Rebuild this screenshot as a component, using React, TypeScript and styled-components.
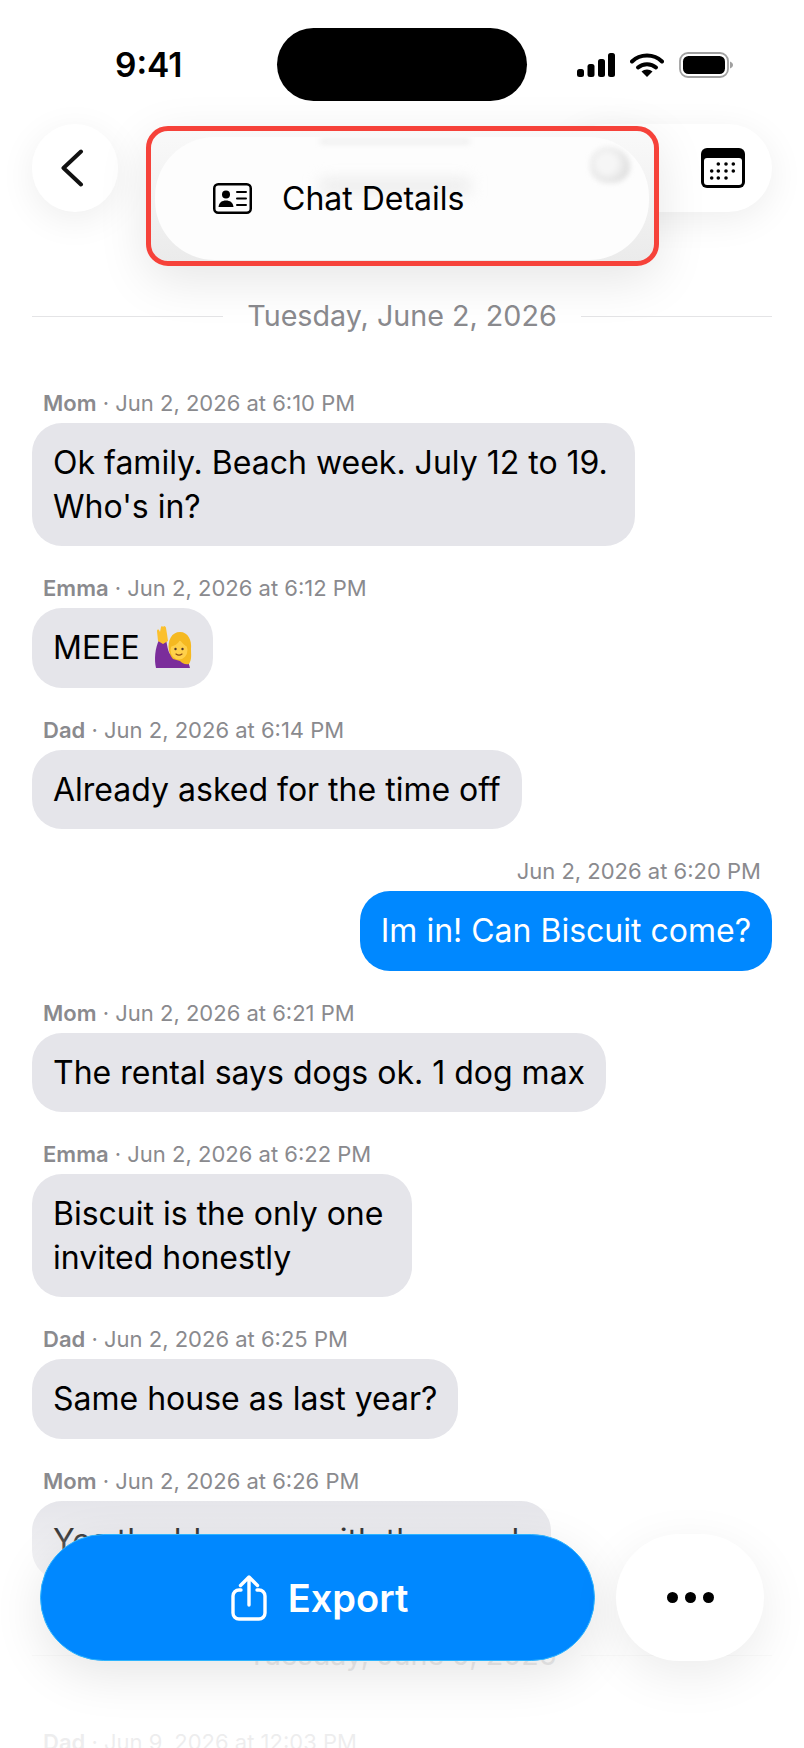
import React from 'react';
import styled, { createGlobalStyle } from 'styled-components';

const GlobalStyle = createGlobalStyle`
  html, body {
    margin: 0;
    padding: 0;
    background: #fff;
  }
  body {
    font-family: Inter, "Liberation Sans", sans-serif;
    -webkit-font-smoothing: antialiased;
  }
`;

type Message = {
  name?: string;
  time: string;
  text: string;
  emoji?: boolean;
  mine?: boolean;
  roomy?: boolean;
};

const firstDay: Message[] = [
  { name: 'Mom', time: 'Jun 2, 2026 at 6:10 PM', text: "Ok family. Beach week. July 12 to 19. Who's in?" },
  { name: 'Emma', time: 'Jun 2, 2026 at 6:12 PM', text: 'MEEE', emoji: true },
  { name: 'Dad', time: 'Jun 2, 2026 at 6:14 PM', text: 'Already asked for the time off' },
  { time: 'Jun 2, 2026 at 6:20 PM', text: 'Im in! Can Biscuit come?', mine: true },
  { name: 'Mom', time: 'Jun 2, 2026 at 6:21 PM', text: 'The rental says dogs ok. 1 dog max' },
  { name: 'Emma', time: 'Jun 2, 2026 at 6:22 PM', text: 'Biscuit is the only one\ninvited honestly', roomy: true },
  { name: 'Dad', time: 'Jun 2, 2026 at 6:25 PM', text: 'Same house as last year?' },
  { name: 'Mom', time: 'Jun 2, 2026 at 6:26 PM', text: 'Yes the blue one with the porch' },
];

const WavingWoman = () => (
  <EmojiSvg viewBox="0 0 38 42" aria-hidden="true">
    <path d="M2 42c-2-8-1-20 3-28l7-1c1 6 2 12 4 15l10 3 8 4 2 7z" fill="#7b2d9b" />
    <path d="M4 15 3 5c0-1 1-2 2-1l1 2 1-5c0-1 2-1 2 0l1-1c1 0 2 1 2 2l1 6 1 7-5 3z" fill="#fbc02d" />
    <path d="M15 25c-2-11 3-19 11-19s12 8 11 17c0 6 1 10-2 15-4 1-7-1-9-3l-7-2c-2-2-3-5-4-8z" fill="#f5b921" />
    <ellipse cx="25" cy="24" rx="8.500" ry="9.500" fill="#ffd04a" />
    <path d="M16 21c4-1 8-3 10-7 2 3 5 6 8 7l-1-8-8-3-7 3z" fill="#f5b921" />
    <circle cx="21.500" cy="23" r="1.200" fill="#4e342e" />
    <circle cx="28.500" cy="23" r="1.200" fill="#4e342e" />
    <path d="M22 28c2 1.500 4 1.500 6 0" fill="none" stroke="#8d4a12" strokeWidth="1.200" strokeLinecap="round" />
  </EmojiSvg>
);

const ChatBubble = ({ message }: { message: Message }) => (
  <MessageRow $mine={message.mine}>
    <Meta>
      {message.name && (
        <>
          <SenderName>{message.name}</SenderName> ·{' '}
        </>
      )}
      {message.time}
    </Meta>
    <Bubble $mine={message.mine} $roomy={message.roomy}>
      {message.text}
      {message.emoji && <WavingWoman />}
    </Bubble>
  </MessageRow>
);

const App = () => {
  return (
    <Screen>
      <GlobalStyle />
      <StatusBar>
        <Clock>9:41</Clock>
        <Island />
        <StatusIcons>
          <svg width="38" height="24" viewBox="0 0 38 24" aria-hidden="true">
            <rect x="0" y="16" width="7" height="8" rx="2.500" />
            <rect x="10.500" y="11" width="7" height="13" rx="2.500" />
            <rect x="21" y="6" width="7" height="18" rx="2.500" />
            <rect x="31" y="0" width="7" height="24" rx="2.500" />
          </svg>
          <svg width="34" height="25" viewBox="0 0 34 25" aria-hidden="true">
            <path d="M2 9.500C10 1.500 24 1.500 32 9.500" fill="none" stroke="#000" strokeWidth="4" strokeLinecap="round" />
            <path d="M8 15.500C13 11 21 11 26 15.500" fill="none" stroke="#000" strokeWidth="4" strokeLinecap="round" />
            <path d="M11.500 19.500 17 25l5.500-5.500c-3-2.700-8-2.700-11 0z" />
          </svg>
          <svg width="54" height="26" viewBox="0 0 54 26" aria-hidden="true">
            <rect x="1" y="1" width="48" height="24" rx="8" fill="#fff" stroke="#a0a0a0" strokeWidth="1.800" />
            <rect x="4" y="4" width="42" height="18" rx="5.500" />
            <path d="M51 9.500c2 .7 3 2 3 3.500s-1 2.800-3 3.500z" fill="#a0a0a0" />
          </svg>
        </StatusIcons>
      </StatusBar>

      <NavBar>
        <RoundButton aria-label="Back">
          <svg width="24" height="38" viewBox="0 0 24 38" aria-hidden="true">
            <path d="M21 2.500 3.500 19 21 35.500" fill="none" stroke="#111" strokeWidth="4" strokeLinecap="round" strokeLinejoin="round" />
          </svg>
        </RoundButton>
        <ActionsPill>
          <svg width="44" height="40" viewBox="0 0 44 40" aria-hidden="true">
            <rect x="0" y="0" width="44" height="40" rx="6" />
            <rect x="3" y="10" width="38" height="27" rx="3" fill="#fff" />
            {[
              [17.300, 16], [25, 16], [32.300, 16],
              [10.700, 23], [17.300, 23], [25, 23], [32.300, 23],
              [10.700, 30], [17.300, 30], [25, 30],
            ].map(([cx, cy]) => (
              <circle key={`${cx}-${cy}`} cx={cx} cy={cy} r="1.800" />
            ))}
          </svg>
        </ActionsPill>
      </NavBar>

      <Feed>
        <DateDivider>
          <DateLabel>Tuesday, June 2, 2026</DateLabel>
        </DateDivider>
        {firstDay.map((message) => (
          <ChatBubble key={message.time} message={message} />
        ))}
        <DateDivider $late>
          <DateLabel>Tuesday, June 9, 2026</DateLabel>
        </DateDivider>
        <MessageRow>
          <Meta>
            <SenderName>Dad</SenderName> · Jun 9, 2026 at 12:03 PM
          </Meta>
        </MessageRow>
      </Feed>

      <Highlight>
        <Menu>
          <TitleSmudge />
          <SubtitleSmudge />
          <IconSmudge />
          <MenuRow>
            <svg width="39" height="31" viewBox="0 0 39 31" aria-hidden="true">
              <rect x="1.250" y="1.250" width="36.500" height="28.500" rx="4" fill="none" stroke="#000" strokeWidth="2.500" />
              <circle cx="13" cy="11.500" r="4" />
              <path d="M5.500 24c.5-4.500 3.500-6.500 7.500-6.500s7 2 7.500 6.500z" />
              <path d="M24 9h9M24 15.500h9M24 22h9" stroke="#000" strokeWidth="2" strokeLinecap="round" />
            </svg>
            <MenuLabel>Chat Details</MenuLabel>
          </MenuRow>
        </Menu>
      </Highlight>

      <BottomFade />
      <BottomBar>
        <ExportButton>
          <svg width="36" height="46" viewBox="0 0 36 46" aria-hidden="true">
            <path d="M10 15H8a6 6 0 0 0-6 6v17a6 6 0 0 0 6 6h20a6 6 0 0 0 6-6V21a6 6 0 0 0-6-6h-2" fill="none" stroke="#fff" strokeWidth="3.400" strokeLinecap="round" />
            <path d="M18 30V3M9.500 10.500 18 2l8.500 8.500" fill="none" stroke="#fff" strokeWidth="3.400" strokeLinecap="round" strokeLinejoin="round" />
          </svg>
          Export
        </ExportButton>
        <MoreButton aria-label="More">
          <Dot />
          <Dot />
          <Dot />
        </MoreButton>
      </BottomBar>
    </Screen>
  );
};

const Screen = styled.div`
  position: relative;
  width: 804px;
  height: 1748px;
  overflow: hidden;
  background: #fff;
`;

const StatusBar = styled.div`
  display: grid;
  grid-template-columns: 277px 250px 277px;
  align-items: center;
  box-sizing: border-box;
  height: 124px;
  padding-top: 28px;
  padding-bottom: 23px;
`;

const Clock = styled.div`
  padding-left: 115px;
  font-size: 33.500px;
  font-weight: 600;
  color: #000;
`;

const Island = styled.div`
  width: 250px;
  height: 73px;
  border-radius: 37px;
  background: #000;
`;

const StatusIcons = styled.div`
  display: flex;
  align-items: center;
  gap: 15px;
  padding-left: 50px;
`;

const NavBar = styled.div`
  display: flex;
  justify-content: space-between;
  height: 88px;
  padding: 0 32px;
  margin-bottom: 85px;
`;

const RoundButton = styled.div`
  display: flex;
  align-items: center;
  justify-content: center;
  width: 86px;
  height: 88px;
  padding-right: 6px;
  box-sizing: border-box;
  border-radius: 44px;
  background: #fff;
  box-shadow: 0 8px 36px rgba(0, 0, 0, 0.07);
`;

const ActionsPill = styled.div`
  display: flex;
  align-items: center;
  justify-content: flex-end;
  width: 210px;
  height: 88px;
  padding-right: 27px;
  box-sizing: border-box;
  border-radius: 44px;
  background: #fff;
  box-shadow: 0 8px 36px rgba(0, 0, 0, 0.07);
`;

const Feed = styled.div`
  display: flex;
  flex-direction: column;
  padding: 0 32px;
`;

const DateDivider = styled.div<{ $late?: boolean }>`
  display: flex;
  align-items: center;
  gap: 24px;
  height: 38px;
  margin-top: ${(p) => (p.$late ? '56px' : '0')};
  margin-bottom: 26px;
  &::before,
  &::after {
    content: '';
    flex: 1;
    height: 1px;
    background: #e4e4e6;
  }
`;

const DateLabel = styled.span`
  font-size: 28.700px;
  line-height: 38px;
  color: #8a8a8e;
`;

const MessageRow = styled.div<{ $mine?: boolean }>`
  display: flex;
  flex-direction: column;
  align-items: ${(p) => (p.$mine ? 'flex-end' : 'flex-start')};
  padding-top: 30px;
`;

const Meta = styled.div`
  height: 24px;
  padding: 0 11px;
  margin-bottom: 8px;
  font-size: 22px;
  line-height: 24px;
  color: #8a8a8e;
`;

const SenderName = styled.span`
  font-weight: 600;
`;

const Bubble = styled.div<{ $mine?: boolean; $roomy?: boolean }>`
  box-sizing: border-box;
  max-width: 603px;
  padding: 18px ${(p) => (p.$roomy ? '29px' : '21px')} 18px 21px;
  border-radius: 30px;
  font-size: 32px;
  line-height: 43.500px;
  white-space: pre-line;
  color: ${(p) => (p.$mine ? '#fff' : '#000')};
  background: ${(p) => (p.$mine ? '#0088ff' : '#e5e5ea')};
`;

const EmojiSvg = styled.svg`
  width: 38px;
  height: 42px;
  margin-left: 14px;
  vertical-align: -9px;
`;

const Highlight = styled.div`
  position: absolute;
  top: 126px;
  left: 146px;
  box-sizing: border-box;
  width: 513px;
  height: 140px;
  padding: 6px 5px 1px 4px;
  border: 5px solid #f6423a;
  border-radius: 22px;
  background: linear-gradient(to bottom, #f9f9f9, #ebebeb);
  box-shadow: 0 14px 50px rgba(0, 0, 0, 0.1);
`;

const Menu = styled.div`
  position: relative;
  display: flex;
  align-items: center;
  height: 100%;
  overflow: hidden;
  border-radius: 60px;
  background: #fdfdfd;
`;

const MenuRow = styled.div`
  position: relative;
  display: flex;
  align-items: center;
  gap: 30px;
  padding-left: 58px;
`;

const MenuLabel = styled.span`
  font-size: 32px;
  color: #000;
`;

const TitleSmudge = styled.div`
  position: absolute;
  top: 3px;
  left: 165px;
  width: 150px;
  height: 3px;
  background: #e4e4e4;
  filter: blur(3px);
`;

const SubtitleSmudge = styled.div`
  position: absolute;
  top: 44px;
  left: 165px;
  width: 150px;
  height: 10px;
  background: #e4e4e4;
  filter: blur(8px);
`;

const IconSmudge = styled.div`
  position: absolute;
  top: 10px;
  left: 435px;
  width: 40px;
  height: 36px;
  border-radius: 50% 60% 50% 50%;
  background: radial-gradient(circle at 42% 45%, #f6f6f6 30%, #dcdcdc 78%, #d6d6d6 100%);
  filter: blur(2.500px);
`;

const BottomFade = styled.div`
  position: absolute;
  left: 0;
  right: 0;
  bottom: 0;
  height: 250px;
  background: linear-gradient(to bottom, rgba(255, 255, 255, 0), rgba(255, 255, 255, 0.8) 45%, rgba(255, 255, 255, 0.85));
`;

const BottomBar = styled.div`
  position: absolute;
  left: 40px;
  right: 40px;
  bottom: 87px;
  display: flex;
  align-items: stretch;
  justify-content: space-between;
  height: 127px;
`;

const ExportButton = styled.div`
  display: flex;
  align-items: center;
  justify-content: center;
  gap: 21px;
  width: 555px;
  padding-left: 4px;
  border: 1px solid #2cb4ff;
  box-sizing: border-box;
  border-radius: 64px;
  font-size: 38px;
  font-weight: 600;
  color: #fff;
  background: #0088ff;
  box-shadow: 0 14px 50px rgba(0, 0, 0, 0.1);
`;

const MoreButton = styled.div`
  display: flex;
  align-items: center;
  justify-content: center;
  gap: 7px;
  width: 148px;
  border-radius: 64px;
  background: #fff;
  box-shadow: 0 14px 50px rgba(0, 0, 0, 0.08);
`;

const Dot = styled.span`
  width: 11px;
  height: 11px;
  border-radius: 50%;
  background: #000;
`;

export default App;
